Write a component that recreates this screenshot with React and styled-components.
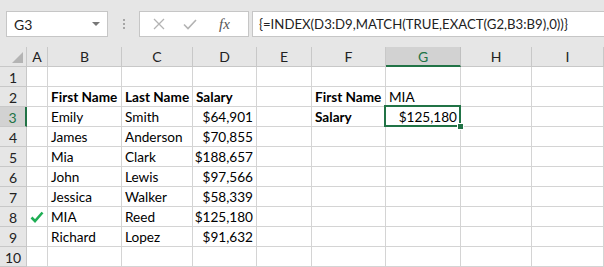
import React from "react";
import styled, { createGlobalStyle } from "styled-components";

const Global = createGlobalStyle`
  html, body { margin: 0; padding: 0; background: #ffffff; }
  body { font-family: Lato, "Open Sans", sans-serif; overflow: hidden; }
  * { box-sizing: border-box; }
`;

const Page = styled.div`
  width: 604px;
  height: 267px;
  overflow: hidden;
  background: #ffffff;
`;

const Toolbar = styled.div`
  height: 47px;
  background: #e6e6e6;
  display: flex;
  align-items: flex-start;
  padding: 11px 0 0 6px;
`;

const NameBox = styled.div`
  width: 102px;
  height: 26px;
  background: #fff;
  border: 1px solid #c6c6c6;
  display: flex;
  align-items: center;
  justify-content: space-between;
  padding: 0 7px 0 7px;
  font-size: 14px;
  color: #222;
`;

const Caret = styled.span`
  width: 0;
  height: 0;
  border-left: 4px solid transparent;
  border-right: 4px solid transparent;
  border-top: 4px solid #777;
`;

const Grip = styled.div`
  width: 31px;
  height: 26px;
  display: flex;
  flex-direction: column;
  align-items: center;
  justify-content: center;
  gap: 2px;
`;

const Dot = styled.span`
  width: 2px;
  height: 2px;
  background: #a6a6a6;
`;

const FxBox = styled.div`
  width: 110px;
  height: 26px;
  background: #fff;
  border: 1px solid #c6c6c6;
  display: flex;
  align-items: center;
  padding-left: 13px;
  gap: 18px;
`;

const Fx = styled.span`
  font-family: "Liberation Serif", "DejaVu Serif", serif;
  font-style: italic;
  font-size: 15px;
  color: #555;
  margin-left: 4px;
`;

const FormulaInput = styled.div`
  flex: 1;
  height: 26px;
  margin-left: 3px;
  background: #fff;
  border: 1px solid #c6c6c6;
  border-right: none;
  display: flex;
  align-items: center;
  padding-left: 6px;
  font-size: 13.2px;
  color: #222;
  white-space: nowrap;
`;

const Sheet = styled.div`
  display: grid;
  grid-template-columns: 27px 21px 74px 71px 64px 55px 74px 75px 71px 72px;
  grid-auto-rows: 20px;
`;

const Corner = styled.div`
  background: #e6e6e6;
  border-right: 1px solid #c8c8c8;
  border-bottom: 1px solid #c8c8c8;
  position: relative;
  &::after {
    content: "";
    position: absolute;
    right: 3px;
    bottom: 3px;
    border-left: 11px solid transparent;
    border-bottom: 11px solid #b4b4b4;
  }
`;

const ColHead = styled.div`
  background: ${(p) => (p.$sel ? "#d2d2d2" : "#e6e6e6")};
  border-right: 1px solid ${(p) => (p.$sel ? "#c0c0c0" : "#c8c8c8")};
  border-bottom: ${(p) => (p.$sel ? "2px solid #217346" : "1px solid #c8c8c8")};
  color: ${(p) => (p.$sel ? "#217346" : "#222")};
  font-size: 14px;
  display: flex;
  align-items: center;
  justify-content: center;
  padding-top: ${(p) => (p.$sel ? "1px" : "0")};
`;

const RowHead = styled.div`
  background: ${(p) => (p.$sel ? "#d2d2d2" : "#e6e6e6")};
  border-right: ${(p) => (p.$sel ? "2px solid #217346" : "1px solid #c8c8c8")};
  border-bottom: 1px solid #c8c8c8;
  color: ${(p) => (p.$sel ? "#217346" : "#222")};
  font-size: 14px;
  display: flex;
  align-items: center;
  justify-content: center;
  padding-top: 1px;
`;

const Cell = styled.div`
  border-right: 1px solid #d4d4d4;
  border-bottom: 1px solid #d4d4d4;
  font-size: 13.6px;
  font-weight: ${(p) => (p.$bold ? 700 : 400)};
  color: #000;
  display: flex;
  align-items: center;
  justify-content: ${(p) => (p.$right ? "flex-end" : "flex-start")};
  padding: 1px 3px 0 3px;
  white-space: nowrap;
  position: relative;
`;

const ActiveCell = styled(Cell)`
  &::after {
    content: "";
    position: absolute;
    left: -2px;
    top: -2px;
    right: -1px;
    bottom: -1px;
    border: 2px solid #217346;
    pointer-events: none;
  }
  &::before {
    content: "";
    position: absolute;
    right: -4px;
    bottom: -4px;
    width: 5px;
    height: 5px;
    background: #217346;
    border: 1px solid #fff;
    z-index: 2;
  }
`;

const CheckCell = styled(Cell)`
  justify-content: center;
  padding: 0;
`;

const cols = ["A", "B", "C", "D", "E", "F", "G", "H", "I"];

const data = [
  [],
  ["", { t: "First Name", b: 1 }, { t: "Last Name", b: 1 }, { t: "Salary", b: 1 }, "", { t: "First Name", b: 1 }, "MIA"],
  ["", "Emily", "Smith", { t: "$64,901", r: 1 }, "", { t: "Salary", b: 1 }, { t: "$125,180", r: 1, active: 1 }],
  ["", "James", "Anderson", { t: "$70,855", r: 1 }],
  ["", "Mia", "Clark", { t: "$188,657", r: 1 }],
  ["", "John", "Lewis", { t: "$97,566", r: 1 }],
  ["", "Jessica", "Walker", { t: "$58,339", r: 1 }],
  [{ check: 1 }, "MIA", "Reed", { t: "$125,180", r: 1 }],
  ["", "Richard", "Lopez", { t: "$91,632", r: 1 }],
  [],
];

const Check = () => (
  <svg width="14" height="12" viewBox="0 0 14 12">
    <path d="M1.5 6.5 L5 10 L12.5 1.5" fill="none" stroke="#1fae55" strokeWidth="2.6" />
  </svg>
);

const XIcon = () => (
  <svg width="12" height="12" viewBox="0 0 12 12">
    <path d="M1 1 L11 11 M11 1 L1 11" stroke="#b3b3b3" strokeWidth="1.3" fill="none" />
  </svg>
);

const CheckIcon = () => (
  <svg width="14" height="11" viewBox="0 0 14 11">
    <path d="M1 5.5 L5 9.5 L13 1" stroke="#b3b3b3" strokeWidth="1.6" fill="none" />
  </svg>
);

export default function App() {
  return (
    <Page>
      <Global />
      <Toolbar>
        <NameBox>
          G3
          <Caret />
        </NameBox>
        <Grip>
          <Dot />
          <Dot />
          <Dot />
        </Grip>
        <FxBox>
          <XIcon />
          <CheckIcon />
          <Fx>fx</Fx>
        </FxBox>
        <FormulaInput>{"{=INDEX(D3:D9,MATCH(TRUE,EXACT(G2,B3:B9),0))}"}</FormulaInput>
      </Toolbar>
      <Sheet>
        <Corner />
        {cols.map((c) => (
          <ColHead key={c} $sel={c === "G"}>
            {c}
          </ColHead>
        ))}
        {data.map((row, ri) => (
          <React.Fragment key={ri}>
            <RowHead $sel={ri === 2}>{ri + 1}</RowHead>
            {cols.map((c, ci) => {
              const v = row[ci];
              if (v && v.check) {
                return (
                  <CheckCell key={c}>
                    <Check />
                  </CheckCell>
                );
              }
              if (v && typeof v === "object") {
                const C = v.active ? ActiveCell : Cell;
                return (
                  <C key={c} $bold={v.b} $right={v.r}>
                    {v.t}
                  </C>
                );
              }
              return <Cell key={c}>{v || ""}</Cell>;
            })}
          </React.Fragment>
        ))}
      </Sheet>
    </Page>
  );
}
